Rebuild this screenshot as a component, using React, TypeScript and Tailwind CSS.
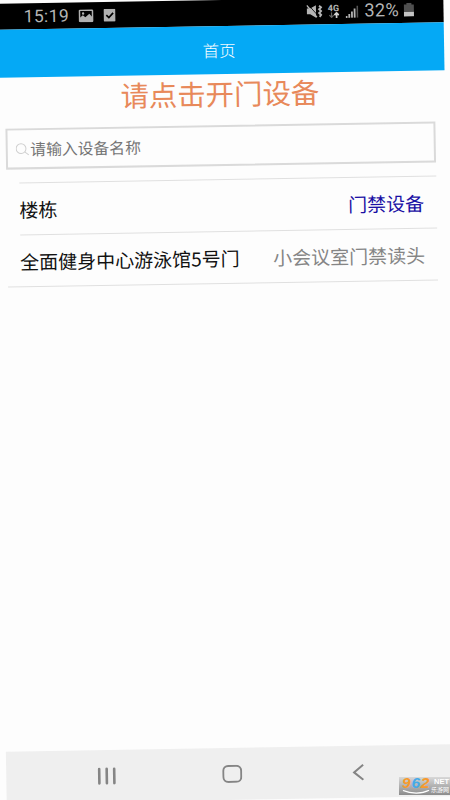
import { ReactNode } from "react";

const devices = [
  {
    name: "楼栋",
    value: "门禁设备",
    valueClass: "text-[#1a10a4]",
    lineClass: "ml-[13px]",
  },
  {
    name: "全面健身中心游泳馆5号门",
    value: "小会议室门禁读头",
    valueClass: "text-[#858585]",
    lineClass: "",
  },
];

export default function App() {
  return (
    <div className="relative h-[800px] w-[450px] overflow-hidden bg-[#fdfdfd] font-['Noto_Sans_CJK_SC',sans-serif]">
      <div className="flex h-[800px] w-[450px] -rotate-[0.96deg] flex-col bg-[#fdfdfd]">
        <StatusBar />

        <header className="flex h-[47.5px] items-center justify-center bg-[#05a9f5] text-[16.5px] leading-none font-light text-white">
          首页
        </header>

        <main className="flex flex-1 flex-col px-[10px]">
          <h1 className="mt-[5.5px] text-center text-[28.4px] leading-[28px] text-[#e8895a]">
            请点击开门设备
          </h1>

          {/* Search */}
          <div className="mt-[18px] flex h-[41px] items-center border-2 border-[#dadada] pl-[7.5px]">
            <SearchIcon />
            <span className="ml-px text-[15.8px] leading-none text-[#757575]">
              请输入设备名称
            </span>
          </div>

          {/* Device list */}
          <div className="mt-[12.5px] ml-[13px] h-px bg-[#e0e0e0]" />
          {devices.map((device) => (
            <DeviceRow key={device.name} {...device} />
          ))}
        </main>

        <NavBar />
      </div>

      <Watermark />
    </div>
  );
}

function StatusBar() {
  return (
    <div className="flex h-[26px] items-center bg-black pr-[29px] pl-[30px] font-[Roboto,sans-serif] text-[17.5px] leading-none text-[#b4b4b4]">
      <span className="w-[55px] pt-[2px] tracking-[0.4px]">15:19</span>
      <svg width="15" height="13" viewBox="0 0 15 13">
        <rect x="0.9" y="0.9" width="13.2" height="11.2" rx="0.8" fill="none" stroke="#b0b0b0" strokeWidth="1.7" />
        <circle cx="4.6" cy="4.2" r="1.2" fill="#b0b0b0" />
        <path d="M1 11V8.6L4.3 6l2.5 2 4-3.4L14 8.2V12H1z" fill="#b0b0b0" />
      </svg>
      <svg className="ml-[10px]" width="12" height="13" viewBox="0 0 12 13">
        <rect width="12" height="12.6" rx="1" fill="#b0b0b0" />
        <path d="M2.8 6.2l2.5 2.5 4.3-4.6" fill="none" stroke="#000" strokeWidth="1.7" />
      </svg>

      <div className="ml-auto flex items-center pt-px">
        {/* Muted speaker with vibration */}
        <svg width="16" height="14" viewBox="0 0 16 14">
          <path d="M0.3 4h3.4L9.5 0.8v12.6L3.7 9.8H0.3z" fill="#b4b4b4" />
          <path d="M1.8 0.2l8.6 9.8" stroke="#000" strokeWidth="0.8" />
          <path d="M0.3 0.8l10 12" stroke="#b4b4b4" strokeWidth="1.5" />
          <path d="M12.6 1.4l2 1.6-2 1.9 2 1.9-2 1.9 2 1.9-1.6 1.8" fill="none" stroke="#b4b4b4" strokeWidth="1.9" />
        </svg>
        <div className="ml-[5px] flex w-[12px] flex-col items-center">
          <span className="text-[9px] leading-[8px] font-bold">4G</span>
          <svg width="11" height="6" viewBox="0 0 11 6">
            <path d="M3 0v5M0.8 3L3 5.3 5.2 3" fill="none" stroke="#666" strokeWidth="1.2" />
            <path d="M8 6V1M5.8 3L8 0.7 10.2 3" fill="none" stroke="#d0d0d0" strokeWidth="1.7" />
          </svg>
        </div>
        <svg className="ml-[6px]" width="13" height="13" viewBox="0 0 13 13">
          <path d="M1 13v-2M3.7 13V9.2M6.4 13V6.6M9.1 13V3.8" stroke="#b4b4b4" strokeWidth="1.8" />
          <path d="M11.9 13V1" stroke="#555" strokeWidth="1.6" />
        </svg>
        <span className="ml-[6px] w-[35px] text-[18.2px] tracking-[0.2px]">32%</span>
        <svg className="ml-[4px]" width="11" height="14" viewBox="0 0 11 14">
          <path d="M3 0h5v1.6h2.4V9H0.4V1.6H3z" fill="#505050" />
          <path d="M0.4 9h10v4.5H0.4z" fill="#c4c4c4" />
        </svg>
      </div>
    </div>
  );
}

type DeviceRowProps = {
  name: string;
  value: ReactNode;
  valueClass: string;
  lineClass: string;
};

function DeviceRow({ name, value, valueClass, lineClass }: DeviceRowProps) {
  return (
    <>
      <div className="flex h-[51px] items-center justify-between pr-[12.5px] pl-[12.5px] text-[19px] leading-none">
        <span className="text-[#111]">{name}</span>
        <span className={valueClass}>{value}</span>
      </div>
      <div className={`h-px bg-[#e0e0e0] ${lineClass}`} />
    </>
  );
}

function SearchIcon() {
  return (
    <svg width="14" height="14" viewBox="0 0 14 14" fill="none" stroke="#cfcfcf" strokeWidth="1">
      <circle cx="5.3" cy="6.2" r="4.9" />
      <path d="M8.9 9.6l4 3" />
    </svg>
  );
}

function NavBar() {
  return (
    <nav className="flex h-[52px] items-center justify-between bg-[#efefef] pr-[92px] pl-[90.5px]">
      <svg width="19" height="18" viewBox="0 0 19 18" stroke="#858585" strokeWidth="2.6" strokeLinecap="round">
        <path d="M2 1.8v14.4M9.5 1.8v14.4M17 1.8v14.4" />
      </svg>
      <svg className="mr-[3px]" width="20" height="18" viewBox="0 0 20 18" fill="none" stroke="#858585" strokeWidth="2">
        <rect x="1" y="1" width="18" height="16" rx="5" />
      </svg>
      <svg width="12" height="17" viewBox="0 0 12 17" fill="none" stroke="#858585" strokeWidth="2">
        <path d="M11 1L1.8 8.5 11 16" />
      </svg>
    </nav>
  );
}

function Watermark() {
  return (
    <div className="absolute top-[777px] left-[399px] flex h-[18px] w-[51px] bg-gradient-to-b from-[#d8d8d8] to-[#8c8c8c] pl-[3px] font-['Liberation_Sans',sans-serif]">
      <div className="w-[29px]">
        <div className="-mt-[2px] text-[15.5px] leading-[16px] font-bold tracking-[0.8px] italic">
          <span className="text-[#f79a2c]">9</span>
          <span className="text-[#45aae8]">6</span>
          <span className="text-[#f79a2c]">2</span>
        </div>
        <svg className="-mt-px" width="28" height="4" viewBox="0 0 28 4" fill="none" stroke="#fff" strokeWidth="1.3">
          <path d="M1 0.5c8 3.5 19 3.5 26-0.2" />
        </svg>
      </div>
      <div className="text-white">
        <div className="pl-[3px] text-[7.5px] leading-[9px] font-bold">NET</div>
        <div className="font-['Noto_Sans_CJK_SC',sans-serif] text-[6px] leading-[8px] whitespace-nowrap">
          乐游网
        </div>
      </div>
    </div>
  );
}
